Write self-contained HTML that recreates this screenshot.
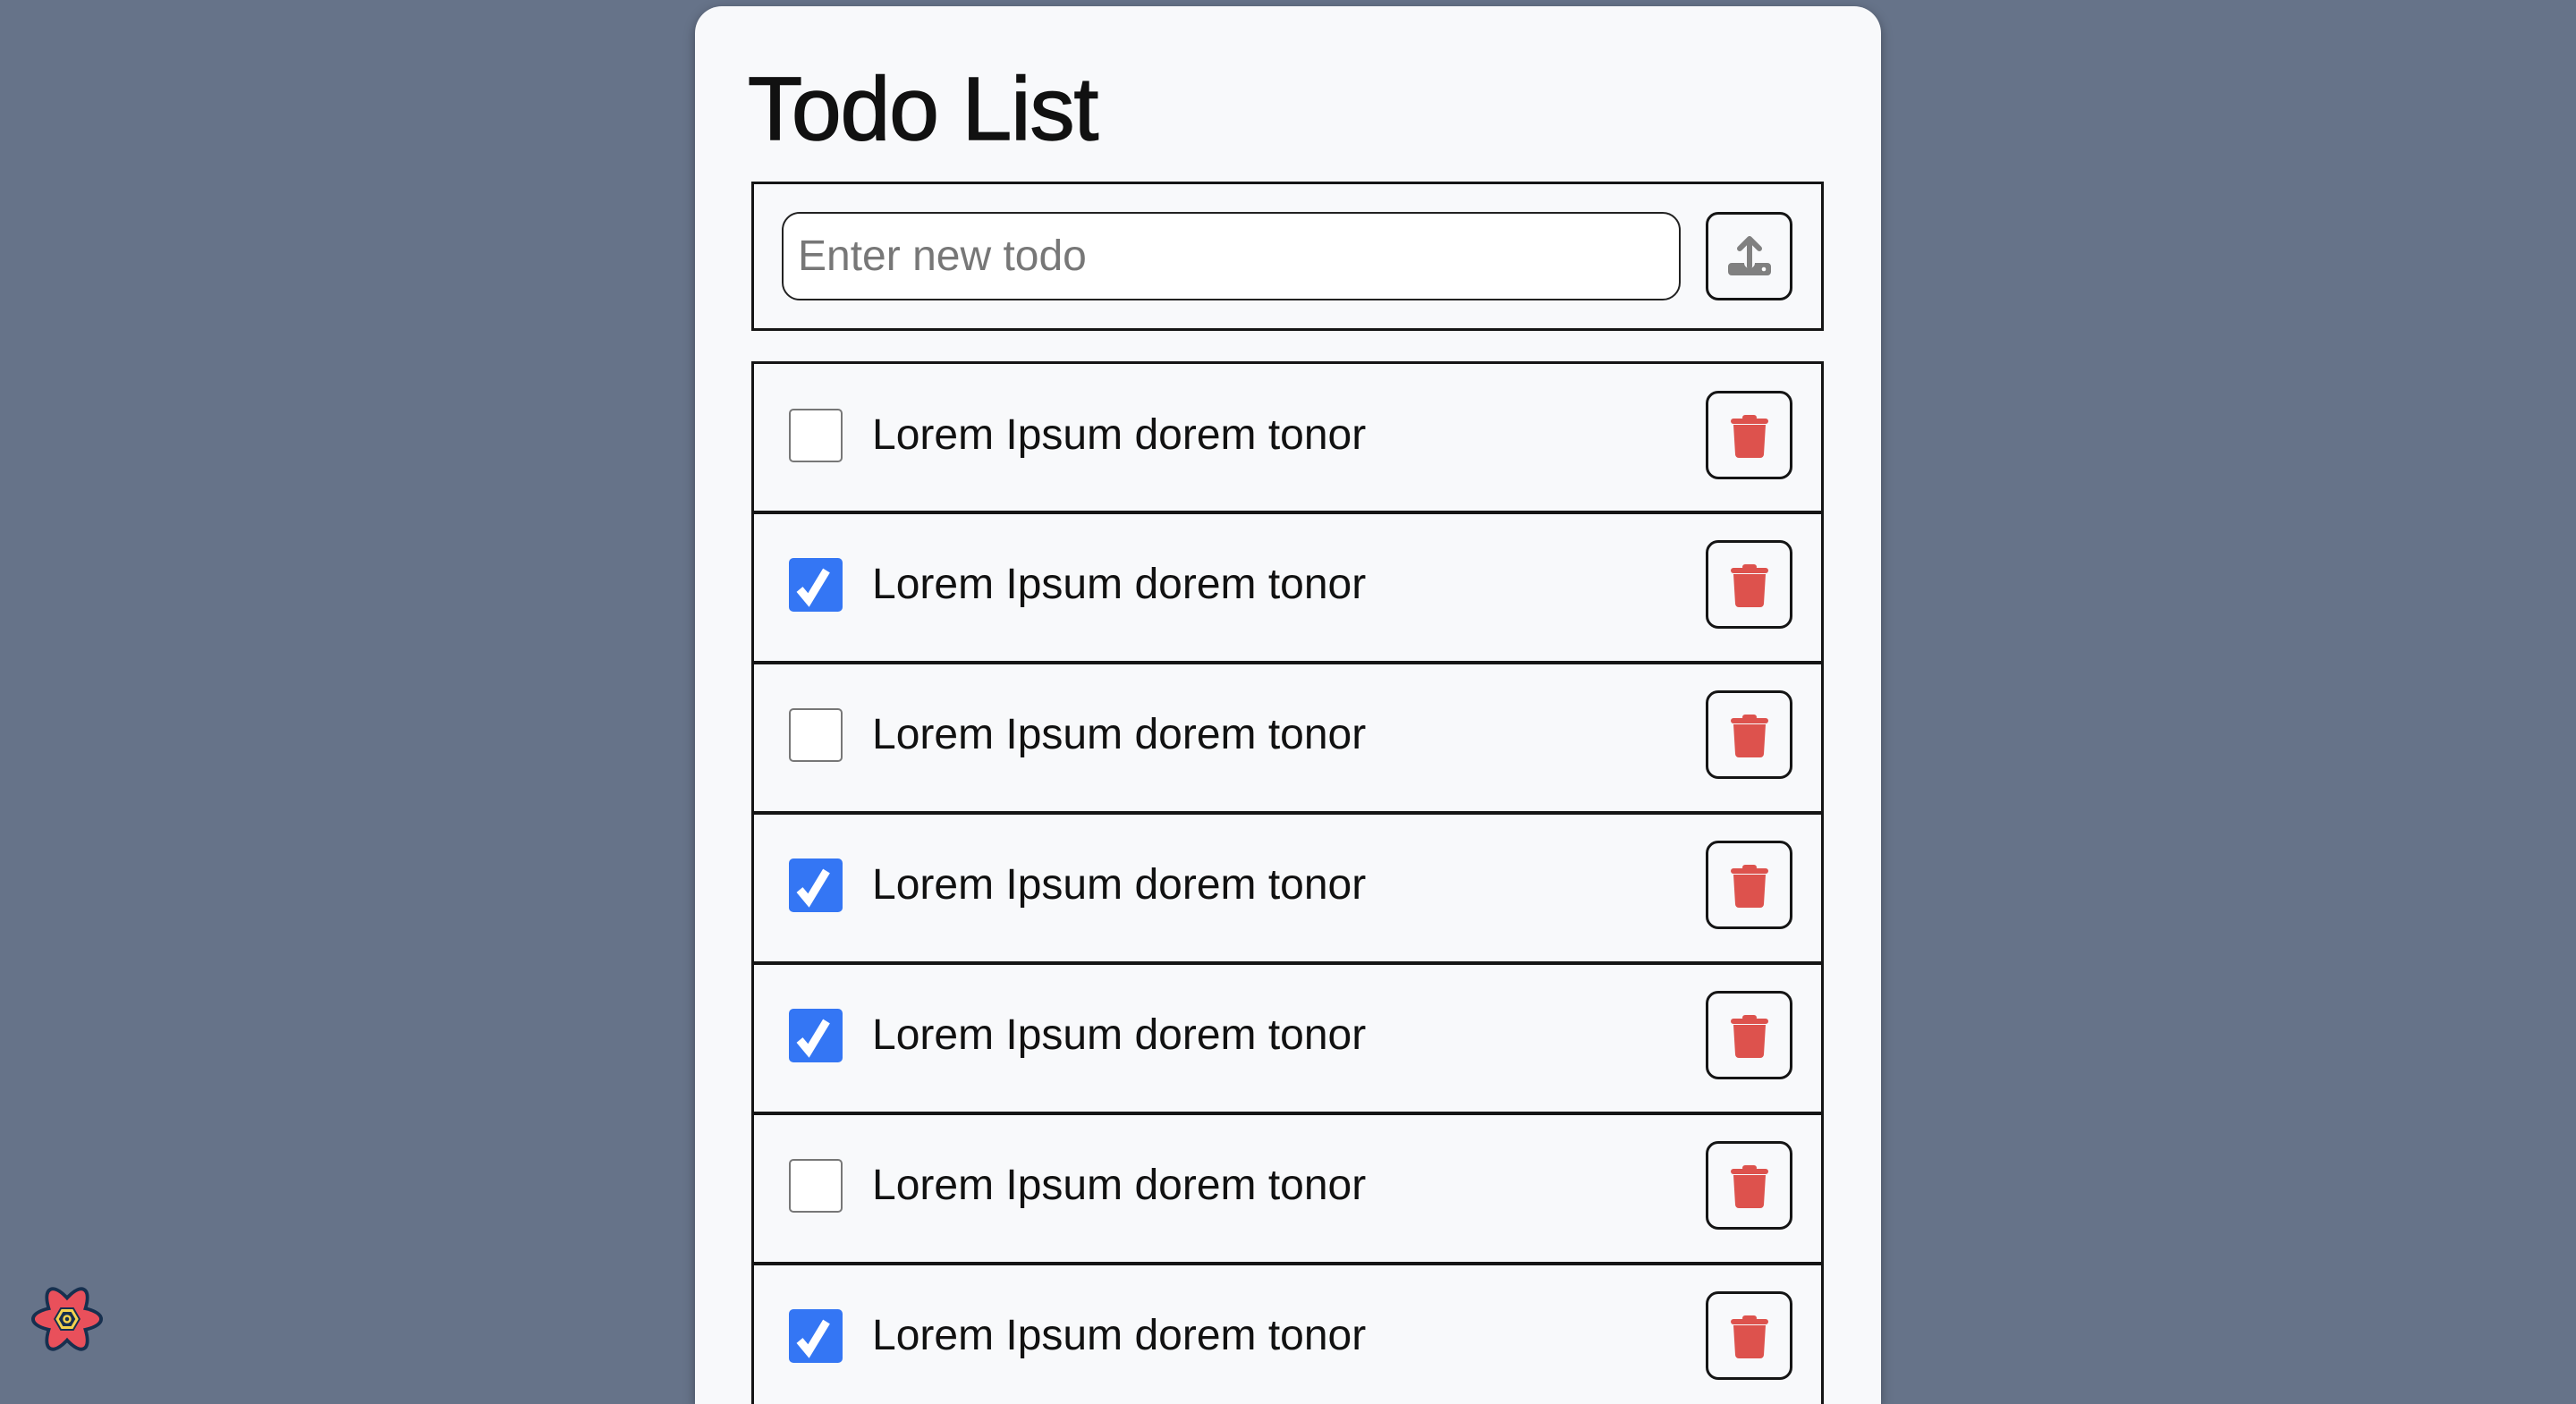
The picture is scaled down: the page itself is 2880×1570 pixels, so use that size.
<!DOCTYPE html>
<html><head><meta charset="utf-8"><style>
*{box-sizing:border-box;margin:0;padding:0}
html,body{width:2880px;height:1570px;overflow:hidden}
body{background:#667389;position:relative;font-family:"Liberation Sans",sans-serif}
.card{position:absolute;left:777px;top:7px;width:1326px;height:1563px;background:#f8f9fb;border-radius:30px 30px 0 0;box-shadow:0 4px 12px rgba(0,0,0,.35)}
h1{position:absolute;left:836px;top:72px;font-size:100px;font-weight:normal;color:#111;letter-spacing:-1px;line-height:1;-webkit-text-stroke:1.5px #111}
.box{position:absolute;left:840px;width:1199px;border:3px solid #151515;background:#f8f9fb}
.inp{position:absolute;left:874px;top:237px;width:1005px;height:99px;border:2px solid #222;border-radius:20px;background:#fff;font-size:48px;color:#777;padding-left:16px;line-height:95px}
.btn{position:absolute;left:1907px;width:97px;height:99px;border:3px solid #151515;border-radius:14px;display:flex;align-items:center;justify-content:center}
.cb{position:absolute;left:882px;width:60px;height:60px;border-radius:5px}
.cb.off{background:#fff;border:2px solid #777}
.cb.on{background:#3476f4}
.txt{position:absolute;left:975px;font-size:48px;color:#111;line-height:60px}
.clip{position:absolute;left:0;top:0;width:2880px;height:1570px;overflow:hidden}
</style></head><body>
<div class="clip">
<div class="card"></div>
<h1>Todo List</h1>
<div class="box" style="top:203px;height:167px"></div>
<div class="inp">Enter new todo</div>
<div class="btn" style="top:237px"><svg width="52" height="52" viewBox="0 0 52 52"><path d="M26 37V6M15 17L26 6L37 17" stroke="#808080" stroke-width="6" fill="none" stroke-linecap="round" stroke-linejoin="round"/><path d="M6 33h14a6 6 0 0 0 12 0h14a4 4 0 0 1 4 4v6a4 4 0 0 1-4 4H6a4 4 0 0 1-4-4v-6a4 4 0 0 1 4-4z" fill="#808080"/><circle cx="42" cy="40" r="2.3" fill="#fff"/></svg></div>
<div id="rows"></div>
</div>
<svg style="position:absolute;left:32px;top:1432px" width="86" height="86" viewBox="-43 -43 86 86">
<g stroke="#17304f" stroke-width="4" fill="#e9505b">
<ellipse rx="38" ry="14"/><ellipse rx="38" ry="14" transform="rotate(60)"/><ellipse rx="38" ry="14" transform="rotate(-60)"/>
</g>
<g fill="#e9505b"><ellipse rx="36" ry="12"/><ellipse rx="36" ry="12" transform="rotate(60)"/><ellipse rx="36" ry="12" transform="rotate(-60)"/></g>
<polygon points="15,0 7.5,13 -7.5,13 -15,0 -7.5,-13 7.5,-13" fill="#17304f"/>
<polygon points="11,0 5.5,9.5 -5.5,9.5 -11,0 -5.5,-9.5 5.5,-9.5" fill="none" stroke="#f4d34e" stroke-width="3"/>
<circle r="3.5" fill="none" stroke="#f4d34e" stroke-width="2.5"/>
</svg>
<script>
var states=[0,1,0,1,1,0,1];var h='';
var tops=[404,571,739,907,1075,1243,1411];
for(var i=0;i<7;i++){var t=tops[i];
h+='<div class="box" style="top:'+t+'px;height:'+(i==6?200:171)+'px;border-width:'+(i==0?3:4)+'px 3px 2px 3px"></div>';
h+='<div class="cb '+(states[i]?'on':'off')+'" style="top:'+(t+53)+'px">'+(states[i]?'<svg width="60" height="60" viewBox="0 0 60 60"><path d="M12 35L22 47L42 14" stroke="#fff" stroke-width="9" fill="none"/></svg>':'')+'</div>';
h+='<div class="txt" style="top:'+(t+53)+'px">Lorem Ipsum dorem tonor</div>';
h+='<div class="btn" style="top:'+(t+33)+'px"><svg width="44" height="52" viewBox="0 0 44 52"><rect x="14" y="3" width="16" height="6" rx="3" fill="#dd524d"/><rect x="1" y="7" width="42" height="6" rx="3" fill="#dd524d"/><path d="M4 14h36l-2 33a4 4 0 0 1-4 4H10a4 4 0 0 1-4-4z" fill="#dd524d"/></svg></div>';}
document.getElementById('rows').innerHTML=h;
</script>
</body></html>
